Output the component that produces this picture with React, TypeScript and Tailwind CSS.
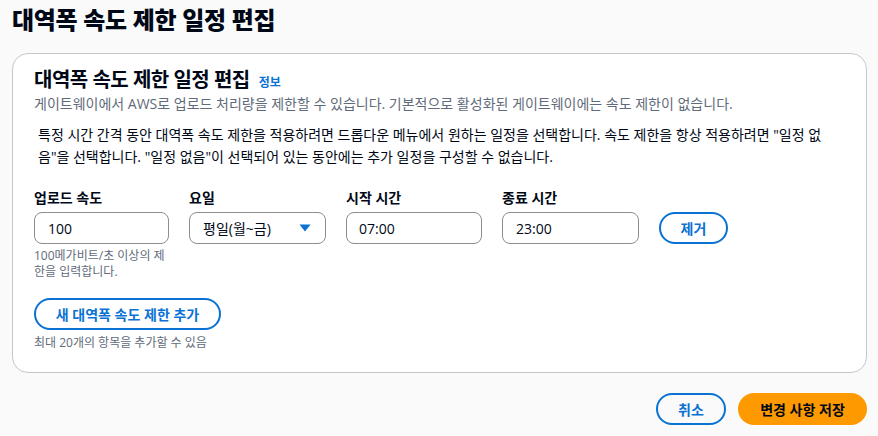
import React from "react";

const font = { fontFamily: '"Open Sans", "Noto Sans CJK KR", sans-serif' };

export default function App() {
  return (
    <div
      className="w-[878px] h-[436px] bg-[#fafafa] text-[#000716] overflow-hidden"
      style={font}
    >
      <div className="px-3 pt-[4px]">
        <h1 className="text-[24px] leading-[32px] font-extrabold tracking-[-0.3px]">대역폭 속도 제한 일정 편집</h1>
        <div className="mt-[17px] bg-white border border-[#c6c6cd] rounded-[16px] w-[855px] h-[320px] px-[21px] pt-[14px]">
          <div className="flex items-baseline gap-[9px]">
            <h2 className="text-[20px] leading-[24px] font-bold tracking-[-0.5px]">대역폭 속도 제한 일정 편집</h2>
            <span className="text-[12px] font-bold text-[#0972d3]">정보</span>
          </div>
          <p className="text-[14px] leading-[20px] text-[#5f6b7a] mt-[2px]">
            게이트웨이에서 AWS로 업로드 처리량을 제한할 수 있습니다. 기본적으로 활성화된 게이트웨이에는 속도 제한이 없습니다.
          </p>
          <p className="text-[14px] leading-[22px] mt-[10px] pl-[4px] pr-[20px]">
            특정 시간 간격 동안 대역폭 속도 제한을 적용하려면 드롭다운 메뉴에서 원하는 일정을 선택합니다. 속도 제한을 항상 적용하려면 "일정 없음"을 선택합니다. "일정 없음"이 선택되어 있는 동안에는 추가 일정을 구성할 수 없습니다.
          </p>
          <div className="flex mt-[20px] gap-[20px]">
            <div className="w-[135px]">
              <div className="text-[14px] leading-[20px] font-bold">업로드 속도</div>
              <div className="mt-[4px] h-[32px] border border-[#8c8c94] rounded-[8px] flex items-center px-[13px] text-[14px]">100</div>
              <div className="mt-[4px] text-[12px] leading-[16px] text-[#5f6b7a]">100메가비트/초 이상의 제한을 입력합니다.</div>
            </div>
            <div className="w-[137px]">
              <div className="text-[14px] leading-[20px] font-bold">요일</div>
              <div className="mt-[4px] h-[32px] border border-[#8c8c94] rounded-[8px] flex items-center justify-between pl-[13px] pr-[14px] text-[14px]">
                <span>평일(월~금)</span>
                <svg width="12" height="8" viewBox="0 0 12 8">
                  <path d="M0.5 0.5 L11.5 0.5 L6 7.5 Z" fill="#0972d3" />
                </svg>
              </div>
            </div>
            <div className="w-[136px]">
              <div className="text-[14px] leading-[20px] font-bold">시작 시간</div>
              <div className="mt-[4px] h-[32px] border border-[#8c8c94] rounded-[8px] flex items-center px-[12px] text-[14px]">07:00</div>
            </div>
            <div className="w-[137px]">
              <div className="text-[14px] leading-[20px] font-bold">종료 시간</div>
              <div className="mt-[4px] h-[32px] border border-[#8c8c94] rounded-[8px] flex items-center px-[13px] text-[14px]">23:00</div>
            </div>
            <div className="pt-[24px]">
              <button className="h-[32px] w-[69px] border-2 border-[#0972d3] rounded-full text-[14px] font-bold text-[#0972d3] flex items-center justify-center">제거</button>
            </div>
          </div>
          <button className="mt-[18px] h-[32px] w-[187px] border-2 border-[#0972d3] rounded-full text-[14px] font-bold text-[#0972d3] flex items-center justify-center">새 대역폭 속도 제한 추가</button>
          <div className="mt-[5px] text-[12px] leading-[16px] text-[#5f6b7a]">최대 20개의 항목을 추가할 수 있음</div>
        </div>
        <div className="flex justify-end gap-[12px] mt-[20px] w-[855px]">
          <button className="h-[32px] w-[70px] border-2 border-[#0972d3] rounded-full text-[14px] font-bold text-[#0972d3] flex items-center justify-center">취소</button>
          <button className="h-[32px] w-[129px] bg-[#ff9900] rounded-full text-[14px] font-bold text-[#000716] flex items-center justify-center">변경 사항 저장</button>
        </div>
      </div>
    </div>
  );
}
